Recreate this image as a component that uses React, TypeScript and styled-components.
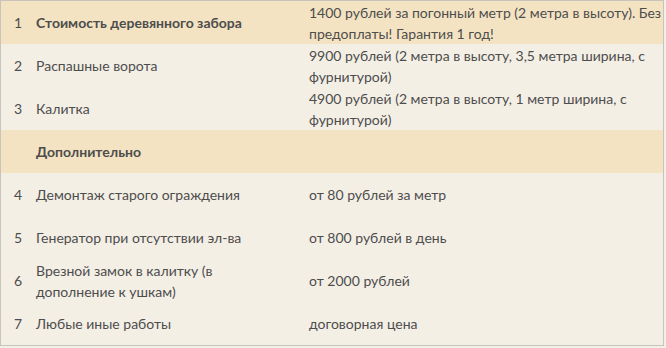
import { FC } from "react";
import styled, { createGlobalStyle } from "styled-components";

interface PriceRow {
  num?: number;
  title: string;
  price: string;
  accent?: boolean;
}

const rows: PriceRow[] = [
  {
    num: 1,
    title: "Стоимость деревянного забора",
    price: "1400 рублей за погонный метр (2 метра в высоту). Без предоплаты! Гарантия 1 год!",
    accent: true,
  },
  {
    num: 2,
    title: "Распашные ворота",
    price: "9900 рублей (2 метра в высоту, 3,5 метра ширина, с фурнитурой)",
  },
  {
    num: 3,
    title: "Калитка",
    price: "4900 рублей (2 метра в высоту, 1 метр ширина, с фурнитурой)",
  },
  { title: "Дополнительно", price: "", accent: true },
  { num: 4, title: "Демонтаж старого ограждения", price: "от 80 рублей за метр" },
  { num: 5, title: "Генератор при отсутствии эл-ва", price: "от 800 рублей в день" },
  { num: 6, title: "Врезной замок в калитку (в дополнение к ушкам)", price: "от 2000 рублей" },
  { num: 7, title: "Любые иные работы", price: "договорная цена" },
];

const App: FC = () => {
  return (
    <>
      <GlobalStyle />
      <Table>
        {rows.map((row, i) => (
          <Row key={i} $accent={row.accent}>
            <Num>{row.num ?? ""}</Num>
            <Title $bold={row.accent}>{row.title}</Title>
            <Price>{row.price}</Price>
          </Row>
        ))}
      </Table>
    </>
  );
};

export default App;

// стили
const GlobalStyle = createGlobalStyle`
  body {
    margin: 0;
    background: #f3efe7;
    font-family: Lato, "Open Sans", sans-serif;
  }
`;

const Table = styled.div`
  width: 664px;
  box-sizing: border-box;
  border: 1px solid #c8c4bc;
  display: flex;
  flex-direction: column;
`;

const Row = styled.div<{ $accent?: boolean }>`
  height: 43px;
  display: grid;
  grid-template-columns: 34px 273px 1fr;
  align-items: center;
  background: ${(p) => (p.$accent ? "#f4e3c2" : "#f4efe5")};
  color: #4d4d4d;
  font-size: 14px;
  line-height: 21px;
`;

const Num = styled.div`
  text-align: center;
`;

const Title = styled.div<{ $bold?: boolean }>`
  padding: 0 20px 0 1px;
  font-weight: ${(p) => (p.$bold ? 700 : 400)};
`;

const Price = styled.div`
  padding: 0 0 0 1px;
`;
